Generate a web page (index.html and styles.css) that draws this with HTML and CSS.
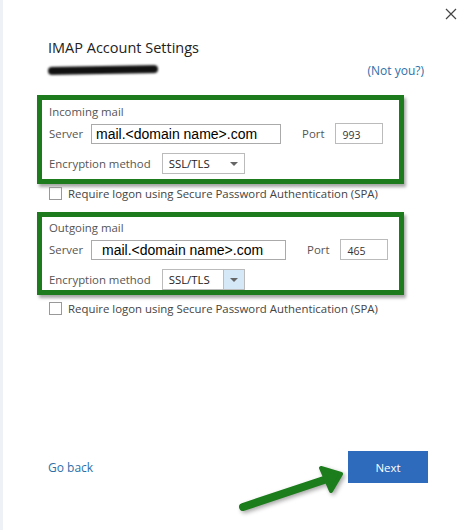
FILE: index.html
```html
<!DOCTYPE html>
<html lang="en">
<head>
  <meta charset="UTF-8" />
  <title>IMAP Account Settings</title>
  <link rel="stylesheet" href="styles.css">
</head>
<body>

  <div class="dialog">
    <div class="topbar">
      <button class="close" title="Close">
        <svg width="12" height="12" viewBox="0 0 12 12"><path d="M1 1L11 11M11 1L1 11" stroke="#444" stroke-width="1.2"/></svg>
      </button>
    </div>

    <h2 class="title">IMAP Account Settings</h2>
    <div class="account">
      <span class="redacted"></span>
      <a href="#" class="link">(Not you?)</a>
    </div>

    <!-- incoming server -->
    <div class="group first">
      <div class="caption">Incoming mail</div>
      <div class="row">
        <span class="label">Server</span>
        <input class="server" value="mail.&lt;domain name&gt;.com">
        <span class="label port-label">Port</span>
        <input class="port" value="993">
      </div>
      <div class="row">
        <span class="label">Encryption method</span>
        <div class="select">
          <span>SSL/TLS</span>
          <span class="arrow"></span>
        </div>
      </div>
    </div>
    <label class="check"><span class="box"></span>Require logon using Secure Password Authentication (SPA)</label>

    <!-- outgoing server -->
    <div class="group out">
      <div class="caption">Outgoing mail</div>
      <div class="row">
        <span class="label">Server</span>
        <input class="server wide" value="mail.&lt;domain name&gt;.com">
        <span class="label port-label">Port</span>
        <input class="port" value="465">
      </div>
      <div class="row">
        <span class="label">Encryption method</span>
        <div class="select active">
          <span>SSL/TLS</span>
          <span class="arrow"></span>
        </div>
      </div>
    </div>
    <label class="check last"><span class="box"></span>Require logon using Secure Password Authentication (SPA)</label>

    <div class="footer">
      <a href="#" class="link">Go back</a>
      <button class="next">Next</button>
    </div>

    <svg class="pointer" width="130" height="60" viewBox="0 0 130 60">
      <path d="M8 45L92 17" stroke="#1c7d1c" stroke-width="8" stroke-linecap="round"/>
      <path d="M86 6L106 12L96 29Z" fill="#1c7d1c" stroke="#1c7d1c" stroke-width="4" stroke-linejoin="round"/>
    </svg>
  </div>

</body>
</html>
```

FILE: styles.css
```css
body {
  margin: 0;
  background: #fff;
  font-family: 'Open Sans', sans-serif;
  color: #333;
}
.dialog {
  position: relative;
  height: 530px;
  border-left: 3px solid #eef1f6;
  box-sizing: border-box;
  padding-left: 45px;
}
.topbar {
  display: flex;
  justify-content: flex-end;
  height: 30px;
  padding-right: 9px;
}
.close {
  border: none;
  background: none;
  padding: 8px 6px;
}
.title {
  margin: 8px 0 0;
  font-size: 14.5px;
  font-weight: normal;
  color: #222;
}
.account {
  display: flex;
  justify-content: space-between;
  align-items: center;
  width: 376px;
  height: 22px;
  margin-top: 2px;
}
.redacted {
  display: block;
  width: 110px;
  height: 8px;
  background: #111;
  border-radius: 4px;
  filter: blur(1px);
  transform: rotate(-1deg);
}
.link {
  color: #2e6fa8;
  text-decoration: none;
  font-size: 12px;
}

/* green highlighted server blocks */
.group {
  width: 350px;
  height: 75px;
  margin: 10px 0 0 -11px;
  padding: 4px 0 0 7px;
  border: 5px solid #1d7a1d;
  box-shadow: 2px 3px 3px rgba(0,0,0,0.35);
  font-size: 11.4px;
  color: #555;
}
.group.first {
  margin-top: 14px;
}
.group.out {
  height: 70px;
  padding-top: 3px;
}
.caption {
  line-height: 16px;
}
.row {
  display: flex;
  align-items: center;
  height: 21px;
  margin-top: 3px;
}
.row + .row {
  margin-top: 9px;
}
.label {
  color: #555;
}
.server {
  width: 190px;
  height: 20px;
  box-sizing: border-box;
  margin-left: 8px;
  padding: 0 4px;
  border: 1px solid #aaa;
  font-family: 'Liberation Sans', sans-serif;
  font-size: 14px;
  color: #000;
}
.server.wide {
  width: 195px;
  padding-left: 10px;
}
.port-label {
  margin-left: 21px;
}
.port {
  width: 48px;
  height: 21px;
  box-sizing: border-box;
  margin-left: 11px;
  padding: 2px 6px 0;
  border: 1px solid #bbb;
  font-family: 'Open Sans', sans-serif;
  font-size: 10.5px;
  color: #333;
}
.select {
  display: flex;
  align-items: center;
  justify-content: space-between;
  width: 83px;
  height: 21px;
  box-sizing: border-box;
  margin-left: 11px;
  padding-left: 6px;
  border: 1px solid #bbb;
  color: #222;
}
.select .arrow {
  display: flex;
  align-items: center;
  justify-content: center;
  width: 20px;
  height: 100%;
}
.select .arrow::after {
  content: "";
  border-left: 4px solid transparent;
  border-right: 4px solid transparent;
  border-top: 4px solid #666;
}
.select.active .arrow {
  background: #d4e8f8;
  border-left: 1px solid #9cc5e8;
}
.check {
  display: flex;
  align-items: center;
  height: 18px;
  margin-left: 1px;
  font-size: 11.4px;
  color: #444;
}
.check.last {
  margin-top: 4px;
}
.check .box {
  width: 11px;
  height: 11px;
  border: 1px solid #999;
  margin-right: 6px;
}
.footer {
  display: flex;
  justify-content: space-between;
  align-items: center;
  width: 380px;
  margin-top: 134px;
}
.next {
  width: 80px;
  height: 32px;
  border: none;
  background: #2e6bbd;
  color: #fff;
  font-family: 'Open Sans', sans-serif;
  font-size: 11.5px;
}
.pointer {
  position: absolute;
  left: 232px;
  top: 462px;
  filter: drop-shadow(2px 2px 2px rgba(0,0,0,0.35));
}
```
